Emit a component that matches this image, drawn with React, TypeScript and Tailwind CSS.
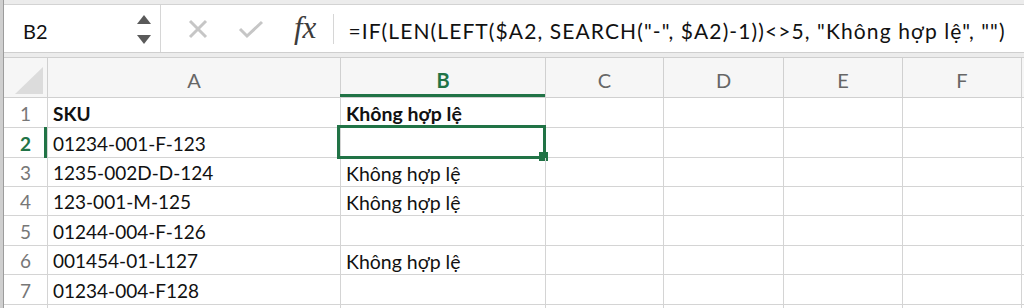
import React from 'react'

const cols = ['A', 'B', 'C', 'D', 'E', 'F']

const rows: { n: number; a: string; b: string; h: string }[] = [
  { n: 1, a: 'SKU', b: 'Không hợp lệ', h: 'h-[30px]' },
  { n: 2, a: '01234-001-F-123', b: '', h: 'h-[30px]' },
  { n: 3, a: '1235-002D-D-124', b: 'Không hợp lệ', h: 'h-[29px]' },
  { n: 4, a: '123-001-M-125', b: 'Không hợp lệ', h: 'h-[29px]' },
  { n: 5, a: '01244-004-F-126', b: '', h: 'h-[30px]' },
  { n: 6, a: '001454-01-L127', b: 'Không hợp lệ', h: 'h-[29px]' },
  { n: 7, a: '01234-004-F128', b: '', h: 'h-[30px]' },
]

const green = 'bg-[#217346]'

export default function App() {
  return (
    <div
      className="w-[1024px] h-[308px] overflow-hidden flex bg-white text-[#111]"
      style={{ fontFamily: 'Lato, "Noto Sans", sans-serif' }}
    >
      <div className="w-[4px] shrink-0 bg-[#cfcfcf] border-r border-[#9c9c9c]" />

      <div className="flex-1 flex flex-col">
        <div className="h-[5px] shrink-0 bg-[#ececec] border-b border-[#d3d3d3]" />

        {/* formula bar */}
        <div className="h-[48px] shrink-0 flex items-stretch border-b border-[#cfcfcf] bg-white">
          <div className="w-[157px] shrink-0 flex items-center justify-between pl-[19px] pr-[9px] border-r border-[#d6d6d6]">
            <span className="text-[20px] pt-[4px]">B2</span>
            <div className="flex flex-col gap-[11px] pt-[2px]">
              <svg width="14" height="9" viewBox="0 0 14 9">
                <path d="M7 0 L14 9 L0 9 Z" fill="#5a5a5a" />
              </svg>
              <svg width="14" height="9" viewBox="0 0 14 9">
                <path d="M0 0 L14 0 L7 9 Z" fill="#5a5a5a" />
              </svg>
            </div>
          </div>
          <div className="flex items-center">
            <svg className="ml-[27px]" width="20" height="20" viewBox="0 0 20 20">
              <path d="M2 2 L18 18 M18 2 L2 18" stroke="#c6c6c6" strokeWidth="3" />
            </svg>
            <svg className="ml-[30px]" width="26" height="20" viewBox="0 0 26 20">
              <path d="M2 10 L9 17 L24 3" stroke="#c6c6c6" strokeWidth="3" fill="none" />
            </svg>
            <span
              className="ml-[30px] text-[31px] italic text-[#3c3c3c] leading-none pb-[2px]"
              style={{ fontFamily: '"Liberation Serif", serif' }}
            >
              fx
            </span>
            <div className="ml-[17px] w-px h-[30px] bg-[#d6d6d6]" />
            <span className="ml-[14px] text-[21px] tracking-[1.1px] whitespace-nowrap pt-[4px]">
              =IF(LEN(LEFT($A2, SEARCH("-", $A2)-1))&lt;&gt;5, "Không hợp lệ", "")
            </span>
          </div>
        </div>

        <div className="h-[5px] shrink-0 bg-[#ececec] border-b border-[#cfcfcf]" />

        {/* sheet */}
        <div className="shrink-0 grid grid-cols-[44px_293px_205px_118px_120px_119px_119px_1fr]">
          <div className="h-[40px] relative bg-[#f6f6f6] border-r border-b border-[#d0d0d0]">
            <svg className="absolute left-[11px] top-[9px]" width="28" height="27" viewBox="0 0 28 27">
              <path d="M28 0 L28 27 L0 27 Z" fill="#dcdcdc" />
            </svg>
          </div>
          {cols.map((c) => (
            <div
              key={c}
              className={`h-[40px] relative flex items-center justify-center pt-[5px] text-[20px] bg-[#f6f6f6] border-r border-b border-[#d0d0d0] ${
                c === 'B' ? 'text-[#217346] font-bold' : 'text-[#666]'
              }`}
            >
              {c}
              {c === 'B' && (
                <div className={`absolute -left-px bottom-0 w-[205px] h-[3px] ${green}`} />
              )}
            </div>
          ))}
          <div className="h-[40px] bg-[#f6f6f6] border-b border-[#d0d0d0]" />

          {rows.map((r) => (
            <React.Fragment key={r.n}>
              <div
                className={`${r.h} relative flex items-center justify-center pt-[3px] text-[19px] border-r border-b border-[#d4d4d4] ${
                  r.n === 2 ? 'text-[#217346] font-bold' : 'text-[#777]'
                }`}
              >
                {r.n}
                {r.n === 2 && (
                  <div className={`absolute right-0 -top-px w-[3px] h-[31px] ${green}`} />
                )}
              </div>
              <div
                className={`${r.h} flex items-center pl-[5px] pt-[3px] text-[19px] whitespace-nowrap border-r border-b border-[#d4d4d4] ${
                  r.n === 1 ? 'font-bold' : ''
                }`}
              >
                {r.a}
              </div>
              <div
                className={`${r.h} relative flex items-center pl-[5px] pt-[3px] text-[19.5px] whitespace-nowrap border-r border-b border-[#d4d4d4] ${
                  r.n === 1 ? 'font-bold' : ''
                }`}
              >
                {r.b}
                {r.n === 2 && (
                  <>
                    <div className="absolute -left-[4px] -top-[3px] w-[209px] h-[34px] border-[3px] border-[#217346]" />
                    <div className={`absolute left-[198px] top-[24px] w-[9px] h-[9px] ${green}`} />
                  </>
                )}
              </div>
              {[0, 1, 2, 3].map((i) => (
                <div key={i} className={`${r.h} border-r border-b border-[#d4d4d4]`} />
              ))}
              <div className={`${r.h} border-b border-[#d4d4d4]`} />
            </React.Fragment>
          ))}
          <div className="h-[30px] border-r border-[#d4d4d4]" />
          <div className="h-[30px] border-r border-[#d4d4d4]" />
          <div className="h-[30px] border-r border-[#d4d4d4]" />
          <div className="h-[30px] border-r border-[#d4d4d4]" />
          <div className="h-[30px] border-r border-[#d4d4d4]" />
          <div className="h-[30px] border-r border-[#d4d4d4]" />
          <div className="h-[30px] border-r border-[#d4d4d4]" />
        </div>
      </div>
    </div>
  )
}
